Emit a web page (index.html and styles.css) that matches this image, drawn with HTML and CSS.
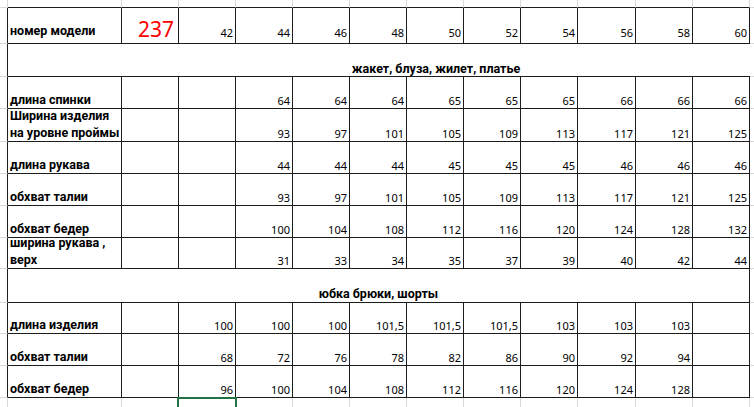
FILE: index.html
```html
<!DOCTYPE html>
<html lang="ru">
<head>
<meta charset="utf-8">
<title>Размерная таблица</title>
<link rel="stylesheet" href="styles.css">
</head>
<body>
<div class="sheet">
  <!-- top gridline stub row -->
  <div class="tl"></div>
  <div class="tt"></div><div class="tt"></div><div class="tt"></div><div class="tt"></div>
  <div class="tt"></div><div class="tt"></div><div class="tt"></div><div class="tt"></div>
  <div class="tt"></div><div class="tt"></div><div class="tt"></div><div class="tt"></div>
  <div class="tr"></div>

  <!-- model / sizes -->
  <div class="ls"></div>
  <div class="c lbl r1">номер модели</div>
  <div class="c model">237</div>
  <div class="c num r1">42</div><div class="c num r1">44</div><div class="c num r1">46</div>
  <div class="c num r1">48</div><div class="c num r1">50</div><div class="c num r1">52</div>
  <div class="c num r1">54</div><div class="c num r1">56</div><div class="c num r1">58</div>
  <div class="c num r1">60</div>
  <div class="rs"></div>

  <!-- section 1 header -->
  <div class="ls"></div>
  <div class="h1a"></div>
  <div class="h1b">жакет, блуза, жилет, платье</div>
  <div class="rs"></div>

  <!-- section 1 rows -->
  <div class="ls"></div>
  <div class="c lbl">длина спинки</div>
  <div class="c"></div><div class="c"></div>
  <div class="c num">64</div><div class="c num">64</div><div class="c num">64</div>
  <div class="c num">65</div><div class="c num">65</div><div class="c num">65</div>
  <div class="c num">66</div><div class="c num">66</div><div class="c num">66</div>
  <div class="rs"></div>

  <div class="ls"></div>
  <div class="c lbl">Ширина изделия<br>на уровне проймы</div>
  <div class="c"></div><div class="c"></div>
  <div class="c num">93</div><div class="c num">97</div><div class="c num">101</div>
  <div class="c num">105</div><div class="c num">109</div><div class="c num">113</div>
  <div class="c num">117</div><div class="c num">121</div><div class="c num">125</div>
  <div class="rs"></div>

  <div class="ls"></div>
  <div class="c lbl">длина рукава</div>
  <div class="c"></div><div class="c"></div>
  <div class="c num">44</div><div class="c num">44</div><div class="c num">44</div>
  <div class="c num">45</div><div class="c num">45</div><div class="c num">45</div>
  <div class="c num">46</div><div class="c num">46</div><div class="c num">46</div>
  <div class="rs"></div>

  <div class="ls"></div>
  <div class="c lbl">обхват талии</div>
  <div class="c"></div><div class="c"></div>
  <div class="c num">93</div><div class="c num">97</div><div class="c num">101</div>
  <div class="c num">105</div><div class="c num">109</div><div class="c num">113</div>
  <div class="c num">117</div><div class="c num">121</div><div class="c num">125</div>
  <div class="rs"></div>

  <div class="ls"></div>
  <div class="c lbl">обхват бедер</div>
  <div class="c"></div><div class="c"></div>
  <div class="c num">100</div><div class="c num">104</div><div class="c num">108</div>
  <div class="c num">112</div><div class="c num">116</div><div class="c num">120</div>
  <div class="c num">124</div><div class="c num">128</div><div class="c num">132</div>
  <div class="rs"></div>

  <div class="ls"></div>
  <div class="c lbl">ширина рукава ,<br>верх</div>
  <div class="c"></div><div class="c"></div>
  <div class="c num">31</div><div class="c num">33</div><div class="c num">34</div>
  <div class="c num">35</div><div class="c num">37</div><div class="c num">39</div>
  <div class="c num">40</div><div class="c num">42</div><div class="c num">44</div>
  <div class="rs"></div>

  <!-- section 2 header -->
  <div class="ls"></div>
  <div class="h2">юбка брюки, шорты</div>
  <div class="rs"></div>

  <!-- section 2 rows -->
  <div class="ls"></div>
  <div class="c lbl">длина изделия</div>
  <div class="c"></div>
  <div class="c num">100</div><div class="c num">100</div><div class="c num">100</div>
  <div class="c num">101,5</div><div class="c num">101,5</div><div class="c num">101,5</div>
  <div class="c num">103</div><div class="c num">103</div><div class="c num">103</div>
  <div class="c"></div>
  <div class="rs"></div>

  <div class="ls"></div>
  <div class="c lbl">обхват талии</div>
  <div class="c"></div>
  <div class="c num">68</div><div class="c num">72</div><div class="c num">76</div>
  <div class="c num">78</div><div class="c num">82</div><div class="c num">86</div>
  <div class="c num">90</div><div class="c num">92</div><div class="c num">94</div>
  <div class="c"></div>
  <div class="rs"></div>

  <div class="ls"></div>
  <div class="c lbl">обхват бедер</div>
  <div class="c"></div>
  <div class="c num">96</div><div class="c num">100</div><div class="c num">104</div>
  <div class="c num">108</div><div class="c num">112</div><div class="c num">116</div>
  <div class="c num">120</div><div class="c num">124</div><div class="c num">128</div>
  <div class="c"></div>
  <div class="rs"></div>

  <!-- bottom gridline stub row -->
  <div class="bs"></div><div class="bs"></div><div class="bs"></div>
  <div class="bs sel"></div>
  <div class="bs"></div><div class="bs"></div><div class="bs"></div><div class="bs"></div>
  <div class="bs"></div><div class="bs"></div><div class="bs"></div><div class="bs"></div>
  <div class="bs"></div>
  <div class="bs end"></div>
</div>
</body>
</html>
```

FILE: styles.css
```css
html, body {
  margin: 0;
  padding: 0;
  background: #ffffff;
}

body {
  width: 754px;
  height: 407px;
  overflow: hidden;
  font-family: "Noto Sans", "Open Sans", "DejaVu Sans", sans-serif;
  color: #000000;
}

.sheet {
  --dark: #1c1c1c;
  --light: #d8d8d8;
  display: grid;
  grid-template-columns: 8px 114px repeat(8, 57px) 58px 57px 57px 4px;
  grid-template-rows: 8px 36px 33px 32px 33px 32px 32px 32px 31px 34px 31px 32px 32px 9px;
}

.sheet > div {
  box-sizing: border-box;
  min-width: 0;
}

/* gridline stubs outside the bordered table */
.tl { border-right: 1px solid var(--light); border-bottom: 1px solid var(--light); }
.tt { border-right: 1px solid var(--light); border-bottom: 1px solid var(--dark); }
.tr { border-bottom: 1px solid var(--light); }
.ls { border-right: 1px solid var(--dark); border-bottom: 1px solid var(--light); }
.rs { border-bottom: 1px solid var(--light); }
.bs { border-right: 1px solid var(--light); }
.bs.end { border-right: none; }

.sel { position: relative; }
.sel::after {
  content: "";
  position: absolute;
  left: -2px;
  top: -1px;
  width: 60px;
  height: 12px;
  box-sizing: border-box;
  border: 2px solid #217346;
  border-bottom: none;
}

/* table cells */
.c {
  display: flex;
  align-items: flex-end;
  border-right: 1px solid var(--dark);
  border-bottom: 1px solid var(--dark);
  white-space: nowrap;
}

.num {
  justify-content: flex-end;
  font-size: 11px;
  line-height: 13px;
  padding: 0 2px 1px 0;
}

.num.r1 { padding-bottom: 4px; }

.lbl {
  font-family: Roboto, "Noto Sans", sans-serif;
  font-weight: 700;
  font-size: 12.5px;
  line-height: 17px;
  padding: 0 0 0.5px 2px;
}

.lbl.r1 { padding-bottom: 4px; }

.model {
  justify-content: flex-end;
  font-size: 21px;
  line-height: 24px;
  color: #ff0000;
  padding: 0 4px 2.5px 0;
}

/* section headers */
.h1a {
  border-bottom: 1px solid var(--dark);
}

.h1b {
  grid-column: span 11;
  display: flex;
  align-items: flex-end;
  justify-content: center;
  border-bottom: 1px solid var(--dark);
  font-family: Roboto, "Noto Sans", sans-serif;
  font-weight: 700;
  font-size: 12.5px;
  line-height: 15px;
}

.h2 {
  grid-column: span 12;
  display: flex;
  align-items: flex-end;
  justify-content: center;
  border-right: 1px solid var(--dark);
  border-bottom: 1px solid var(--dark);
  font-family: Roboto, "Noto Sans", sans-serif;
  font-weight: 700;
  font-size: 12.5px;
  line-height: 17px;
  padding-bottom: 0.5px;
}
```
